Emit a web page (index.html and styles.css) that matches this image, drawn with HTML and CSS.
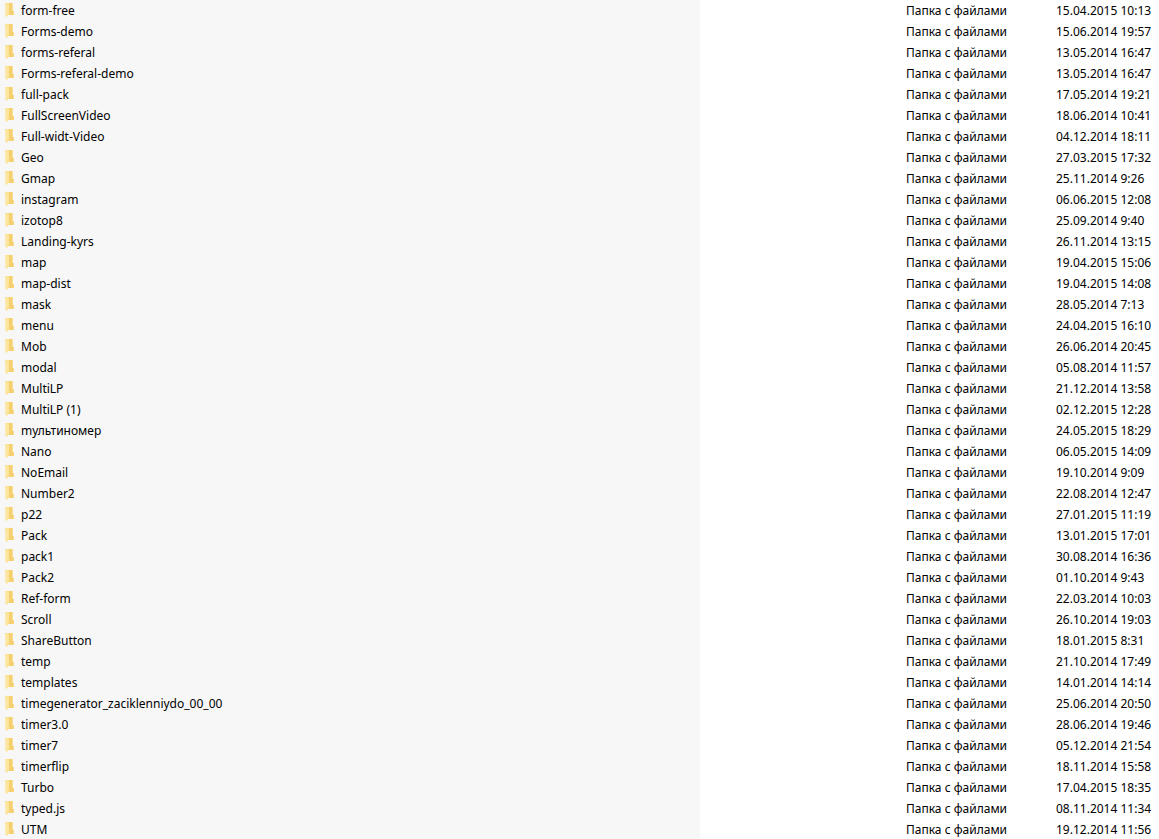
FILE: index.html
```html
<!DOCTYPE html>
<html lang="ru">
<head>
    <meta charset="UTF-8">
    <meta name="viewport" content="width=device-width, initial-scale=1.0">
    <title>Список папок</title>
    <link rel="stylesheet" href="styles.css">
</head>
<body>
    <!-- Иконка папки, используется в каждой строке -->
    <svg class="sprite" aria-hidden="true">
        <symbol id="folder" viewBox="0 0 9 14">
            <path d="M0 0h8v8h1v4H3L2 14 0 12z" fill="#f9dc87"/>
            <path d="M4 0h4v12H4z" fill="#f5d071"/>
            <path d="M7 0h1v8H7z" fill="#f9de92"/>
            <path d="M8 8h1v4H8z" fill="#f6d67f"/>
            <path d="M0 0h3l1 2v9l-2 1V3z" fill="#fce59a"/>
            <path d="M0 1l2 2v11l-2-2z" fill="#fce9ad"/>
        </symbol>
    </svg>

    <table class="files">
        <colgroup>
            <col class="col-name">
            <col class="col-size">
            <col class="col-type">
            <col class="col-date">
        </colgroup>
        <tbody id="rows"></tbody>
    </table>

    <script src="script.js"></script>
</body>
</html>
```

FILE: styles.css
```css
body {
    margin: 0;
    background: #ffffff;
    color: #000000;
    font-family: "Noto Sans", "Open Sans", sans-serif;
    font-size: 12px;
    line-height: 21px;
    overflow-x: hidden;
}
.sprite {
    display: none;
}
.files {
    width: 100%;
    table-layout: fixed;
    border-collapse: collapse;
}
.col-size {
    width: 200px;
}
.col-type {
    width: 150px;
}
.col-date {
    width: 109px;
}
.files td {
    height: 21px;
    padding: 0 0 0 6px;
    white-space: nowrap;
}
.files .name {
    padding-left: 5px;
    background: #f7f7f7;
}
.item {
    display: flex;
    align-items: flex-start;
    gap: 7px;
}
.icon {
    width: 9px;
    height: 14px;
    padding-top: 3px;
}
```

FILE: script.js
```js
// Папки: имя и дата изменения
const folders = [
    ['form-free', '15.04.2015 10:13'],
    ['Forms-demo', '15.06.2014 19:57'],
    ['forms-referal', '13.05.2014 16:47'],
    ['Forms-referal-demo', '13.05.2014 16:47'],
    ['full-pack', '17.05.2014 19:21'],
    ['FullScreenVideo', '18.06.2014 10:41'],
    ['Full-widt-Video', '04.12.2014 18:11'],
    ['Geo', '27.03.2015 17:32'],
    ['Gmap', '25.11.2014 9:26'],
    ['instagram', '06.06.2015 12:08'],
    ['izotop8', '25.09.2014 9:40'],
    ['Landing-kyrs', '26.11.2014 13:15'],
    ['map', '19.04.2015 15:06'],
    ['map-dist', '19.04.2015 14:08'],
    ['mask', '28.05.2014 7:13'],
    ['menu', '24.04.2015 16:10'],
    ['Mob', '26.06.2014 20:45'],
    ['modal', '05.08.2014 11:57'],
    ['MultiLP', '21.12.2014 13:58'],
    ['MultiLP (1)', '02.12.2015 12:28'],
    ['mультиномер', '24.05.2015 18:29'],
    ['Nano', '06.05.2015 14:09'],
    ['NoEmail', '19.10.2014 9:09'],
    ['Number2', '22.08.2014 12:47'],
    ['p22', '27.01.2015 11:19'],
    ['Pack', '13.01.2015 17:01'],
    ['pack1', '30.08.2014 16:36'],
    ['Pack2', '01.10.2014 9:43'],
    ['Ref-form', '22.03.2014 10:03'],
    ['Scroll', '26.10.2014 19:03'],
    ['ShareButton', '18.01.2015 8:31'],
    ['temp', '21.10.2014 17:49'],
    ['templates', '14.01.2014 14:14'],
    ['timegenerator_zaciklenniydo_00_00', '25.06.2014 20:50'],
    ['timer3.0', '28.06.2014 19:46'],
    ['timer7', '05.12.2014 21:54'],
    ['timerflip', '18.11.2014 15:58'],
    ['Turbo', '17.04.2015 18:35'],
    ['typed.js', '08.11.2014 11:34'],
    ['UTM', '19.12.2014 11:56']
];

const rows = document.getElementById('rows');

folders.forEach(([name, date]) => {
    const row = document.createElement('tr');
    row.innerHTML = `
        <td class="name">
            <div class="item">
                <svg class="icon" aria-hidden="true"><use href="#folder"/></svg>
                <span>${name}</span>
            </div>
        </td>
        <td></td>
        <td>Папка с файлами</td>
        <td>${date}</td>`;
    rows.appendChild(row);
});
```
